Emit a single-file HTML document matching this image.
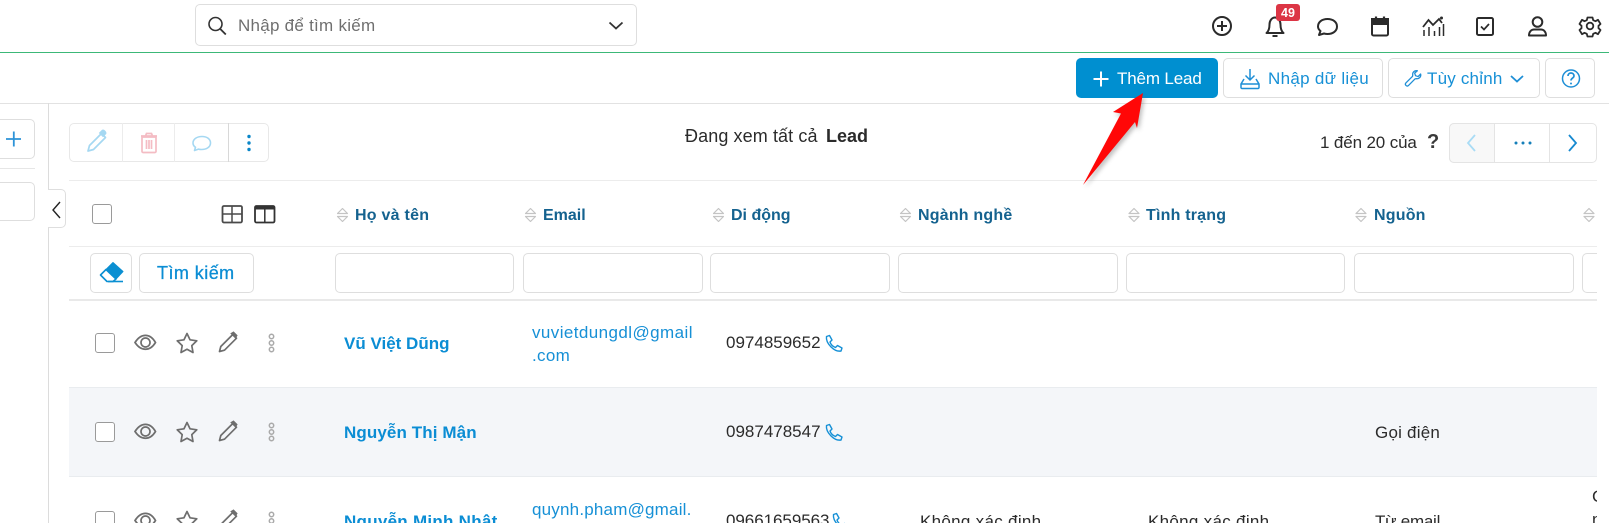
<!DOCTYPE html>
<html lang="vi">
<head>
<meta charset="utf-8">
<title>Lead</title>
<style>
html,body{margin:0;padding:0;background:#fff;width:1609px;height:523px;overflow:hidden}
body{position:relative;font-family:"Liberation Sans",sans-serif;font-size:17px;color:#2b2b2b}
.t{position:absolute;white-space:nowrap;line-height:24px;height:24px}
.b{position:absolute;box-sizing:border-box;background:#fff;border:1px solid #dedede;border-radius:5px}
.l{position:absolute;background:#e6e6e6;height:1px}
.h{color:#14628f;font-weight:bold;font-size:16px}
.n{color:#0b8dd4;font-weight:bold;font-size:17px}
.e{color:#1690d6}
.cb{position:absolute;box-sizing:border-box;width:20px;height:20px;border:1px solid #9a9a9a;border-radius:3px;background:#fff}
svg{position:absolute;left:0;top:0;overflow:visible}
</style>
</head>
<body>
<div class="l" style="left:0;top:52px;width:1609px;height:1px;background:#3cb878"></div>
<div class="b" style="left:195px;top:4px;width:442px;height:42px"></div>
<div class="t" style="left:238px;top:14px;color:#6f6f6f;letter-spacing:.26px">Nhập để tìm kiếm</div>

<div class="b" style="left:1076px;top:58px;width:142px;height:40px;background:#008fd0;border:0"></div>
<div class="t" style="left:1117px;top:67px;color:#fff;letter-spacing:-.15px">Thêm Lead</div>
<div class="b" style="left:1223px;top:58px;width:160px;height:40px"></div>
<div class="t e" style="left:1268px;top:67px;letter-spacing:.3px">Nhập dữ liệu</div>
<div class="b" style="left:1388px;top:58px;width:152px;height:40px"></div>
<div class="t e" style="left:1427px;top:67px;letter-spacing:.2px">Tùy chỉnh</div>
<div class="b" style="left:1545px;top:58px;width:50px;height:40px"></div>

<div class="l" style="left:0;top:103px;width:1609px;height:1px;background:#e2e2e2"></div>
<div class="l" style="left:48px;top:103px;width:1px;height:420px;background:#dcdcdc"></div>

<div class="b" style="left:-10px;top:119px;width:45px;height:40px"></div>
<div class="l" style="left:0;top:168px;width:35px"></div>
<div class="b" style="left:-10px;top:182px;width:45px;height:39px"></div>
<div class="b" style="left:48px;top:189px;width:18px;height:39px;border-left:0;border-radius:0 5px 5px 0"></div>

<div class="b" style="left:69px;top:123px;width:200px;height:39px;border-color:#e8e8e8"></div>
<div class="l" style="left:122px;top:123px;width:1px;height:39px;background:#ececec"></div>
<div class="l" style="left:174px;top:123px;width:1px;height:39px;background:#ececec"></div>
<div class="l" style="left:228px;top:123px;width:1px;height:39px;background:#d8d8d8"></div>

<div class="t" style="left:685px;top:124px;font-size:18px;letter-spacing:.1px">Đang xem tất cả</div>
<div class="t" style="left:826px;top:124px;font-size:18px;font-weight:bold">Lead</div>
<div class="t" style="left:1320px;top:131px;letter-spacing:-.13px">1 đến 20 của</div>
<div class="t" style="left:1427px;top:130px;font-size:20px;font-weight:bold;color:#3a3a3a">?</div>
<div class="b" style="left:1449px;top:123px;width:148px;height:40px;border-color:#e4e4e4"></div>
<div class="b" style="left:1449px;top:123px;width:46px;height:40px;background:#f8f8f8;border-color:#e4e4e4;border-radius:5px 0 0 5px"></div>
<div class="l" style="left:1549px;top:123px;width:1px;height:40px;background:#e4e4e4"></div>

<div class="l" style="left:69px;top:180px;width:1528px;background:#ececec"></div>
<div class="cb" style="left:92px;top:204px"></div>
<div class="t h" style="left:355px;top:204px;letter-spacing:.25px">Họ và tên</div>
<div class="t h" style="left:543px;top:204px">Email</div>
<div class="t h" style="left:731px;top:204px">Di động</div>
<div class="t h" style="left:918px;top:204px;letter-spacing:.2px">Ngành nghề</div>
<div class="t h" style="left:1146px;top:204px;letter-spacing:.2px">Tình trạng</div>
<div class="t h" style="left:1374px;top:204px;letter-spacing:.2px">Nguồn</div>

<div class="l" style="left:69px;top:246px;width:1528px;background:#ececec"></div>
<div class="b" style="left:90px;top:253px;width:42px;height:40px"></div>
<div class="b" style="left:139px;top:253px;width:115px;height:40px"></div>
<div class="t e" style="left:157px;top:261px;font-size:18px;letter-spacing:.45px;color:#0b8dd4;-webkit-text-stroke:.3px #0b8dd4">Tìm kiếm</div>
<div class="b" style="left:335px;top:253px;width:179px;height:40px"></div>
<div class="b" style="left:523px;top:253px;width:180px;height:40px"></div>
<div class="b" style="left:710px;top:253px;width:180px;height:40px"></div>
<div class="b" style="left:898px;top:253px;width:220px;height:40px"></div>
<div class="b" style="left:1126px;top:253px;width:219px;height:40px"></div>
<div class="b" style="left:1354px;top:253px;width:220px;height:40px"></div>
<div style="position:absolute;left:1582px;top:253px;width:15px;height:40px;box-sizing:border-box;border:1px solid #dedede;border-right:0;border-radius:5px 0 0 5px"></div>
<div class="l" style="left:69px;top:299px;width:1528px;height:2px;background:#e9e9e9"></div>

<div class="l" style="left:69px;top:387px;width:1528px;height:90px;background:#f4f6f9;box-sizing:border-box;border-top:1px solid #e9ecef;border-bottom:1px solid #e9ecef"></div>

<div class="cb" style="left:95px;top:333px"></div>
<div class="cb" style="left:95px;top:422px"></div>
<div class="cb" style="left:95px;top:511px"></div>

<div class="t n" style="left:344px;top:332px">Vũ Việt Dũng</div>
<div class="t e" style="left:532px;top:321px;letter-spacing:.42px">vuvietdungdl@gmail</div>
<div class="t e" style="left:532px;top:344px;letter-spacing:.3px">.com</div>
<div class="t" style="left:726px;top:331px">0974859652</div>

<div class="t n" style="left:344px;top:421px;letter-spacing:.1px">Nguyễn Thị Mận</div>
<div class="t" style="left:726px;top:420px">0987478547</div>
<div class="t" style="left:1375px;top:421px;letter-spacing:.22px">Gọi điện</div>

<div class="t n" style="left:344px;top:510px;letter-spacing:.27px">Nguyễn Minh Nhật</div>
<div class="t e" style="left:532px;top:498px;letter-spacing:.2px">quynh.pham@gmail.</div>
<div class="t" style="left:726px;top:509px;letter-spacing:-.05px">09661659563</div>
<div class="t" style="left:920px;top:510px;letter-spacing:.3px">Không xác định</div>
<div class="t" style="left:1148px;top:510px;letter-spacing:.3px">Không xác định</div>
<div class="t" style="left:1375px;top:510px;letter-spacing:-.25px">Từ email</div>
<div style="position:absolute;left:1592px;top:485px;width:5px;height:38px;overflow:hidden;line-height:23px">C<br>n</div>

<svg width="1609" height="523" viewBox="0 0 1609 523" fill="none">
<defs>
<filter id="sh" x="-30%" y="-30%" width="160%" height="160%"><feGaussianBlur stdDeviation="2"/></filter>
<g id="eye" fill="none" stroke="#6e6e6e" stroke-width="1.7">
<path d="M135 342.500C141 333 150 333 155.500 342.500C150 351.500 141 351.500 135 342.500Z"/>
<circle cx="145.500" cy="342.500" r="4.500"/>
</g>
<g id="star"><path d="M187 333.500l3 6.300 6.800 1-5 4.800 1.200 6.900-6-3.300-6 3.300 1.200-6.900-5-4.800 6.800-1z" stroke="#6e6e6e" stroke-width="1.700" stroke-linejoin="round"/></g>
<g id="pen"><path d="M219.500 351.500l1.300-5 12-12 3.700 3.700-12 12z" stroke="#6e6e6e" stroke-width="1.700" stroke-linejoin="round"/><path d="M231 333.500l2.500-1.500 3.500 3.500-1.500 2.500z" fill="#6e6e6e" stroke="#6e6e6e"/></g>
<g id="dots" stroke="#aaa" stroke-width="1.500"><circle cx="271.500" cy="336.500" r="2.200"/><circle cx="271.500" cy="343" r="2.200"/><circle cx="271.500" cy="349.500" r="2.200"/></g>
<g id="sort" stroke="#c4c4c4" stroke-width="1.200" stroke-linejoin="round"><path d="M-5 -1.500L0 -6.500L5 -1.500Z"/><path d="M-5 1.500L0 6.500L5 1.500Z"/></g>
<g id="phone"><path d="M-7.500 -7.500l3-1 2.500 4.500-2 2c.8 2.500 2.800 4.500 5.500 5.500l2-2 4.500 2.500-1 3c-6.500 1.200-15.500-7.500-14.500-14.500z" stroke="#1690d6" stroke-width="1.400" stroke-linejoin="round"/></g>
</defs>

<!-- search -->
<circle cx="215.500" cy="24" r="6.500" stroke="#333" stroke-width="1.600"/><path d="M220.300 29l5.500 5.500" stroke="#333" stroke-width="1.800"/>
<path d="M609.500 22.500l6.500 6 6.500-6" stroke="#333" stroke-width="1.800"/>

<!-- top icons -->
<g stroke="#2b2b2b" stroke-width="2">
<circle cx="1222" cy="26" r="9"/><path d="M1222 21v10M1217 26h10"/>
<path d="M1266.500 33c2.500-2 3-5 3-8.500 0-4 2.500-7 5.500-7s5.500 3 5.500 7c0 3.500.5 6.500 3 8.500z" stroke-linejoin="round"/><path d="M1272.500 36h5"/>
<path d="M1318 26.500c0-4.500 4-7.500 9.500-7.500s9.500 3 9.500 7.500-4 7.500-9.500 7.500c-1.500 0-2.500-.2-3.500-.5l-5 1.500 1.500-4c-1.500-1.200-2.500-2.800-2.500-4.500z" stroke-linejoin="round"/>
<rect x="1372" y="19" width="16" height="16.500" rx="1.500"/><path d="M1372 19h16v5h-16z" fill="#2b2b2b"/><path d="M1376 16.500v3M1384 16.500v3" stroke-width="2.200"/>
<path d="M1423 27l5.500-7 4.500 5 6-6 3 4" stroke-width="1.800"/><circle cx="1441.500" cy="18" r="1.500" fill="#2b2b2b" stroke="none"/>
<path d="M1424 30v6M1429 27v9M1434.500 31v5M1439.500 27v9M1443.500 24v12" stroke-width="1.500"/>
<rect x="1477" y="18" width="16" height="17" rx="1.500"/><path d="M1481 26.500l3 3 5-5.500" stroke-width="1.700"/>
<circle cx="1537.500" cy="22" r="4.800"/><path d="M1529 35.500c0-4 2.500-6 5-6h7c2.500 0 5 2 5 6z" stroke-linejoin="round"/>
<circle cx="1590" cy="26" r="3.300" stroke-width="1.800"/>
<path d="M1587.500 17.500h5l.7 2.700 2.300 1 2.500-1.400 2.500 4.200-2 1.800v2.400l2 1.800-2.500 4.200-2.500-1.400-2.300 1-.7 2.700h-5l-.7-2.700-2.300-1-2.500 1.400-2.500-4.200 2-1.800v-2.400l-2-1.800 2.500-4.200 2.500 1.400 2.300-1z" stroke-width="1.800" stroke-linejoin="round"/>
</g>
<rect x="1276" y="4" width="24" height="17" rx="3" fill="#dc3545"/>
<text x="1288" y="17" font-family="Liberation Sans, sans-serif" font-size="12.500" font-weight="bold" fill="#fff" text-anchor="middle">49</text>

<!-- action button icons -->
<path d="M1093.500 79h15M1101 71.500v15" stroke="#fff" stroke-width="2"/>
<g stroke="#1f8fd6" stroke-width="1.500">
<path d="M1250 69v11M1245.500 75.500l4.500 4.500 4.500-4.500"/>
<path d="M1244 79l-3 5v3.500c0 .5.500 1 1 1h16c.5 0 1-.5 1-1V84l-3-5M1241 84h18"/>
<path transform="translate(1414 78) scale(.85) translate(-1401 -78)" d="M1405 69.500c-3-.8-6 1.500-5.500 5l-.2 1.500-8 8c-1.500 1.800 1.200 4.500 3 3l8-8 1.500-.2c3.500.5 5.800-2.500 5-5.500l-3 3-3-1-1-3z" stroke-linejoin="round"/>
<path d="M1511 76l6 5.500 6-5.500" stroke-width="1.800"/>
<circle cx="1571" cy="78.500" r="8.500"/><path d="M1568 76c0-4 6-4 6 0 0 2-3 2.200-3 4.500" stroke-width="1.700"/><circle cx="1571" cy="83.500" r="1" fill="#1f8fd6" stroke="none"/>
</g>

<!-- sidebar -->
<path d="M6 139h15M13.800 131.500v15" stroke="#2d93d8" stroke-width="1.800"/>
<path d="M60 202l-7 8 7 8" stroke="#222" stroke-width="1.400"/>

<!-- toolbar -->
<g stroke="#a5d8f2" stroke-width="1.700">
<path d="M88 151l1.500-5.500 12-12 4 4-12 12z" stroke-linejoin="round"/><path d="M100 133l2.500-2.500c1-.8 3.500 1.800 3 3l-2.500 2.500z" fill="#a5d8f2"/>
<path d="M194 143c0-4 4-6.500 9-6.500s8.500 2.500 8.500 6.500-4 6.500-9 6.500c-1.200 0-2-.1-3-.4l-4 1.400 1-3.200c-1.500-1-2.500-2.500-2.500-4.300z" stroke-width="1.600" transform="translate(-1 0)" stroke-linejoin="round"/>
</g>
<g stroke="#f4bcc4" stroke-width="1.700">
<path d="M142 137h14v14.500c0 .5-.5 1-1 1h-12c-.5 0-1-.5-1-1z"/><path d="M141 136h16M145.500 136l1-2.500h5l1 2.500M146.500 140v9M149 140v9M151.500 140v9"/>
</g>
<circle cx="249" cy="136.500" r="1.700" fill="#0a86c8"/><circle cx="249" cy="143" r="1.700" fill="#0a86c8"/><circle cx="249" cy="149.500" r="1.700" fill="#0a86c8"/>

<!-- pager -->
<path d="M1475 135l-7 8 7 8" stroke="#a9dcf5" stroke-width="1.800"/>
<circle cx="1516" cy="143" r="1.500" fill="#157fb9"/><circle cx="1523" cy="143" r="1.500" fill="#157fb9"/><circle cx="1530" cy="143" r="1.500" fill="#157fb9"/>
<path d="M1569 135l7 8-7 8" stroke="#1689d0" stroke-width="1.800"/>

<!-- grid icons -->
<rect x="222.500" y="206" width="19.500" height="16.500" rx="1.500" stroke="#4a4a4a" stroke-width="1.800"/><path d="M232 206v16.500M222.500 214h19.500" stroke="#4a4a4a" stroke-width="1.500"/>
<rect x="255" y="206" width="19.500" height="16.500" rx="1.500" stroke="#333" stroke-width="1.800"/><path d="M255 206h19.500v3.500H255z" fill="#333"/><path d="M264.800 206v16.500" stroke="#333" stroke-width="1.500"/>

<!-- sort -->
<use href="#sort" x="342.500" y="215"/><use href="#sort" x="530.500" y="215"/><use href="#sort" x="718.500" y="215"/><use href="#sort" x="905.500" y="215"/><use href="#sort" x="1134" y="215"/><use href="#sort" x="1361" y="215"/><use href="#sort" x="1589" y="215"/>

<!-- eraser -->
<path d="M113 262.500L123 271.500L116 279L106 269.500Z" fill="#0a8fd2" stroke="#0a8fd2" stroke-linejoin="round"/>
<path d="M106 269.500L116 279L113 281.500H107L100.500 275Z" fill="#fff" stroke="#0a8fd2" stroke-width="1.600" stroke-linejoin="round"/>
<path d="M108 281.500H123" stroke="#0a8fd2" stroke-width="1.600"/>

<!-- row icons -->
<use href="#eye"/><use href="#star"/><use href="#pen"/><use href="#dots"/>
<use href="#eye" y="89"/><use href="#star" y="89"/><use href="#pen" y="89"/><use href="#dots" y="89"/>
<use href="#eye" y="178"/><use href="#star" y="178"/><use href="#pen" y="178"/><use href="#dots" y="178"/>
<use href="#phone" x="834" y="344"/><use href="#phone" x="834" y="433"/><use href="#phone" x="841" y="522"/>

<!-- arrow -->
<path d="M1143 93L1113 112L1121 113.500L1083 185L1135 122L1137 128Z" fill="#777" opacity=".45" transform="translate(2 3)" filter="url(#sh)"/>
<path d="M1143 93L1113 112L1121 113.500L1083 185L1135 122L1137 128Z" fill="#ff0707"/>
</svg>
</body>
</html>
